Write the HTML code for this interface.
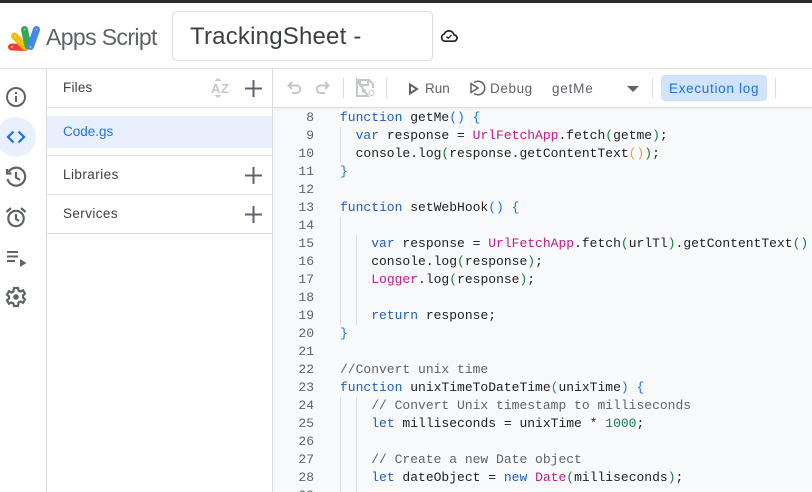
<!DOCTYPE html>
<html><head><meta charset="utf-8"><style>
html,body{margin:0;padding:0}
body{width:812px;height:492px;overflow:hidden;position:relative;background:#fff;font-family:"Liberation Sans",sans-serif;color:#3c4043}
.a{position:absolute;white-space:nowrap}
.l{position:absolute;background:#dadce0}
.ui{font-size:14px;line-height:18px;color:#3c4043}
#ed{position:absolute;left:273px;top:108px;width:539px;height:384px;background:#f8f9fa;overflow:hidden}
.n,.c{position:absolute;font-family:"Liberation Mono",monospace;font-size:13px;line-height:18px;white-space:pre}
.n{left:0;width:41px;text-align:right;color:#5f6368}
.c{left:67px;color:#202124}
.k{color:#1b5fc1}.f{color:#c5198b}.b{color:#1a73e8}.g{color:#188038}.o{color:#e8a33d}.m{color:#5f6368}.d{color:#0b8043}
.v{position:absolute;width:1px;background:#dadce0}
svg{position:absolute;overflow:visible}
</style></head><body>
<div class="a" style="left:0;top:0;width:812px;height:3px;background:#2b2b2b"></div>

<svg style="left:0;top:0" width="45" height="60" viewBox="0 0 45 60" fill="none" stroke-linecap="round" stroke-width="7">
<path d="M11.500 47 L25 47.500" stroke="#ea4335"/>
<path d="M14.500 36 L25 47" stroke="#fbbc04"/>
<path d="M24.500 29.500 L28 46" stroke="#34a853"/>
<path d="M36.500 29.500 L30.500 46.500" stroke="#4285f4"/>
<g fill="#fff" stroke="none" opacity=".6"><circle cx="12" cy="47" r=".9"/><circle cx="15" cy="36" r=".9"/><circle cx="24.500" cy="29.500" r=".9"/><circle cx="36.500" cy="29.500" r=".9"/><circle cx="30.500" cy="47" r=".9"/></g>
</svg>
<div class="a" style="left:46px;top:22px;font-size:23px;line-height:30px;color:#5f6368;letter-spacing:-.62px">Apps Script</div>
<div class="a" style="left:172px;top:11px;width:259px;height:48px;border:1px solid #dadce0;border-radius:5px"></div>
<div class="a" style="left:190px;top:22px;font-size:24px;line-height:30px;color:#3c4043;letter-spacing:.2px">TrackingSheet -</div>
<svg style="left:440px;top:28px" width="18" height="16" viewBox="0 0 18 16" fill="none" stroke="#202124" stroke-width="1.700"><path d="M5 13.200 H13.500 A3.200 3.200 0 0 0 14 6.800 A5.200 5.200 0 0 0 4.200 6 A3.700 3.700 0 0 0 5 13.200Z"/><path d="M6.500 8.500 L8.300 10.200 L11.500 7" stroke-width="1.300"/></svg>

<div class="l" style="left:0;top:68px;width:812px;height:1px"></div>
<div class="l" style="left:46px;top:69px;width:1px;height:423px"></div>
<div class="l" style="left:272px;top:69px;width:1px;height:423px"></div>
<div class="l" style="left:47px;top:107px;width:765px;height:1px"></div>
<div class="l" style="left:47px;top:155px;width:225px;height:1px"></div>
<div class="l" style="left:47px;top:194px;width:225px;height:1px"></div>
<div class="l" style="left:47px;top:233px;width:225px;height:1px"></div>

<!-- rail -->
<svg style="left:6px;top:87px" width="20" height="20" viewBox="0 0 20 20" fill="none" stroke="#5f6368" stroke-width="2"><circle cx="10" cy="10" r="9"/><path d="M10 9v6M10 5v2"/></svg>
<div class="a" style="left:-4px;top:117px;width:40px;height:40px;border-radius:50%;background:#e8f0fe"></div>
<svg style="left:6px;top:130px" width="20" height="14" viewBox="0 0 20 14" fill="none" stroke="#1a73e8" stroke-width="2.200"><path d="M7.500 1.500 L2 7 L7.500 12.500M12.500 1.500 L18 7 L12.500 12.500"/></svg>
<svg style="left:5px;top:166px" width="22" height="22" viewBox="0 0 22 22" fill="none" stroke="#5f6368" stroke-width="2.200"><path d="M3.500 6 A9 9 0 1 1 2.500 13"/><path d="M2 3 V7.500 H6.500"/><path d="M11 6 V11.500 L15 14"/></svg>
<svg style="left:5px;top:206px" width="22" height="22" viewBox="0 0 22 22" fill="none" stroke="#5f6368" stroke-width="2.200"><circle cx="11" cy="12.500" r="7.700"/><path d="M11 8 V13 L14 15M1.500 6 L6 2M20.500 6 L16 2"/></svg>
<svg style="left:7px;top:251px" width="20" height="16" viewBox="0 0 20 16" fill="#5f6368"><rect width="11" height="2" y="0"/><rect width="11" height="2" y="4.500"/><rect width="8" height="2" y="9"/><path d="M13 8 L19.500 12 L13 16Z"/></svg>
<svg style="left:5px;top:286px" width="22" height="22" viewBox="0 0 22 22" fill="none" stroke="#5f6368" stroke-width="2.200"><path d="M9 2h4l.6 2.600 2 .9 2.400-1.300 2 3.400-2 1.800v2.200l2 1.800-2 3.400-2.400-1.300-2 .9L13 20H9l-.6-2.600-2-.9L4 17.800l-2-3.400 2-1.800V10.400l-2-1.800 2-3.400 2.400 1.300 2-.9Z"/><circle cx="11" cy="11" r="2.800" fill="#5f6368" stroke="none"/></svg>

<!-- files -->
<div class="a ui" style="left:63px;top:79px;font-size:13.500px;letter-spacing:.2px">Files</div>
<svg style="left:212px;top:78px" width="20" height="21" fill="#c4c7ca"><path d="M6 0L9.500 3H2.500ZM6 20L9.500 17H2.500Z"/></svg>
<div class="a" style="left:211px;top:81px;font-size:13px;font-weight:700;line-height:15px;color:#c4c7ca;letter-spacing:.5px">AZ</div>
<svg style="left:245px;top:80px" width="17" height="17" stroke="#5f6368" stroke-width="2"><path d="M0 8.500H17M8.500 0V17"/></svg>
<div class="a" style="left:47px;top:116px;width:225px;height:32px;background:#e8f0fe"></div>
<div class="a ui" style="left:63px;top:123px;font-size:13.500px;color:#1a73e8">Code.gs</div>
<div class="a ui" style="left:63px;top:166px;font-size:13.500px;letter-spacing:.45px">Libraries</div>
<svg style="left:245px;top:167px" width="17" height="17" stroke="#5f6368" stroke-width="2"><path d="M0 8.500H17M8.500 0V17"/></svg>
<div class="a ui" style="left:63px;top:205px;font-size:13.500px;letter-spacing:.4px">Services</div>
<svg style="left:245px;top:206px" width="17" height="17" stroke="#5f6368" stroke-width="2"><path d="M0 8.500H17M8.500 0V17"/></svg>

<!-- toolbar -->
<svg style="left:287px;top:81px" width="15" height="14" fill="none" stroke="#c4c7ca" stroke-width="2"><path d="M5 1 L1.500 4.500 L5 8M2 4.500H9.500A3.700 3.700 0 0 1 9.500 12H5"/></svg>
<svg style="left:315px;top:81px" width="15" height="14" fill="none" stroke="#c4c7ca" stroke-width="2"><path d="M10 1 L13.500 4.500 L10 8M13 4.500H5.500A3.700 3.700 0 0 0 5.500 12H10"/></svg>
<div class="l" style="left:343px;top:78px;width:1px;height:20px"></div>
<svg style="left:356px;top:79px" width="20" height="19" fill="none" stroke="#c4c7ca" stroke-width="2"><path d="M1 1H13L17 5V9M12 17H1V1Z"/><path d="M4 2V6H12V2"/><circle cx="8" cy="12" r="2" fill="#c4c7ca" stroke="none"/><circle cx="15.500" cy="14" r="2.500" stroke-width="1"/></svg>
<div class="l" style="left:386px;top:78px;width:1px;height:20px"></div>
<svg style="left:409px;top:83px" width="10" height="12" fill="none" stroke="#5f6368" stroke-width="2"><path d="M1 1.500L8 6L1 10.500Z"/></svg>
<div class="a ui" style="left:425px;top:80px;font-size:13.500px;color:#5f6368">Run</div>
<svg style="left:470px;top:80px" width="16" height="16" fill="none" stroke="#5f6368" stroke-width="1.500"><path d="M1 3.500L8 8L1 12.500Z"/><path d="M4 2.500A6.800 6.800 0 1 1 4 13.500"/></svg>
<div class="a ui" style="left:490px;top:80px;font-size:13.500px;color:#5f6368;letter-spacing:.6px">Debug</div>
<div class="a ui" style="left:552px;top:80px;font-size:13.500px;color:#5f6368;letter-spacing:.8px">getMe</div>
<div class="a" style="left:627px;top:86px;width:0;height:0;border-left:6px solid transparent;border-right:6px solid transparent;border-top:6px solid #5f6368"></div>
<div class="l" style="left:652px;top:78px;width:1px;height:20px"></div>
<div class="a" style="left:661px;top:75px;width:106px;height:26px;border-radius:4px;background:#d2e3fc"></div>
<div class="a ui" style="left:669px;top:80px;font-size:13.500px;color:#1a73e8;letter-spacing:.7px">Execution log</div>
<div class="l" style="left:775px;top:78px;width:1px;height:20px"></div>

<!-- editor -->
<div id="ed">
<div class="a" style="left:0;top:0;width:539px;height:2px;background:#f1f3f4"></div>
<div class="v" style="left:67px;top:19px;height:36px"></div>
<div class="v" style="left:67px;top:109px;height:108px"></div>
<div class="v" style="left:83px;top:127px;height:90px"></div>
<div class="v" style="left:67px;top:289px;height:96px"></div>
<div class="v" style="left:83px;top:289px;height:96px"></div>
<div class="n" style="top:1px">8
9
10
11
12
13
14
15
16
17
18
19
20
21
22
23
24
25
26
27
28
29</div>
<div class="c" style="top:1px"><span class="k">function</span> getMe<span class="b">() {</span>
  <span class="k">var</span> response = <span class="f">UrlFetchApp</span>.fetch<span class="g">(</span>getme<span class="g">)</span>;
  console.log<span class="g">(</span>response.getContentText<span class="o">()</span><span class="g">)</span>;
<span class="b">}</span>

<span class="k">function</span> setWebHook<span class="b">() {</span>

    <span class="k">var</span> response = <span class="f">UrlFetchApp</span>.fetch<span class="g">(</span>urlTl<span class="g">)</span>.getContentText<span class="g">()</span>
    console.log<span class="g">(</span>response<span class="g">)</span>;
    <span class="f">Logger</span>.log<span class="g">(</span>response<span class="g">)</span>;

    <span class="k">return</span> response;
<span class="b">}</span>

<span class="m">//Convert unix time</span>
<span class="k">function</span> unixTimeToDateTime<span class="b">(</span>unixTime<span class="b">) {</span>
    <span class="m">// Convert Unix timestamp to milliseconds</span>
    <span class="k">let</span> milliseconds = unixTime * <span class="d">1000</span>;

    <span class="m">// Create a new Date object</span>
    <span class="k">let</span> dateObject = <span class="k">new</span> <span class="f">Date</span><span class="g">(</span>milliseconds<span class="g">)</span>;</div>
</div>
</body></html>
